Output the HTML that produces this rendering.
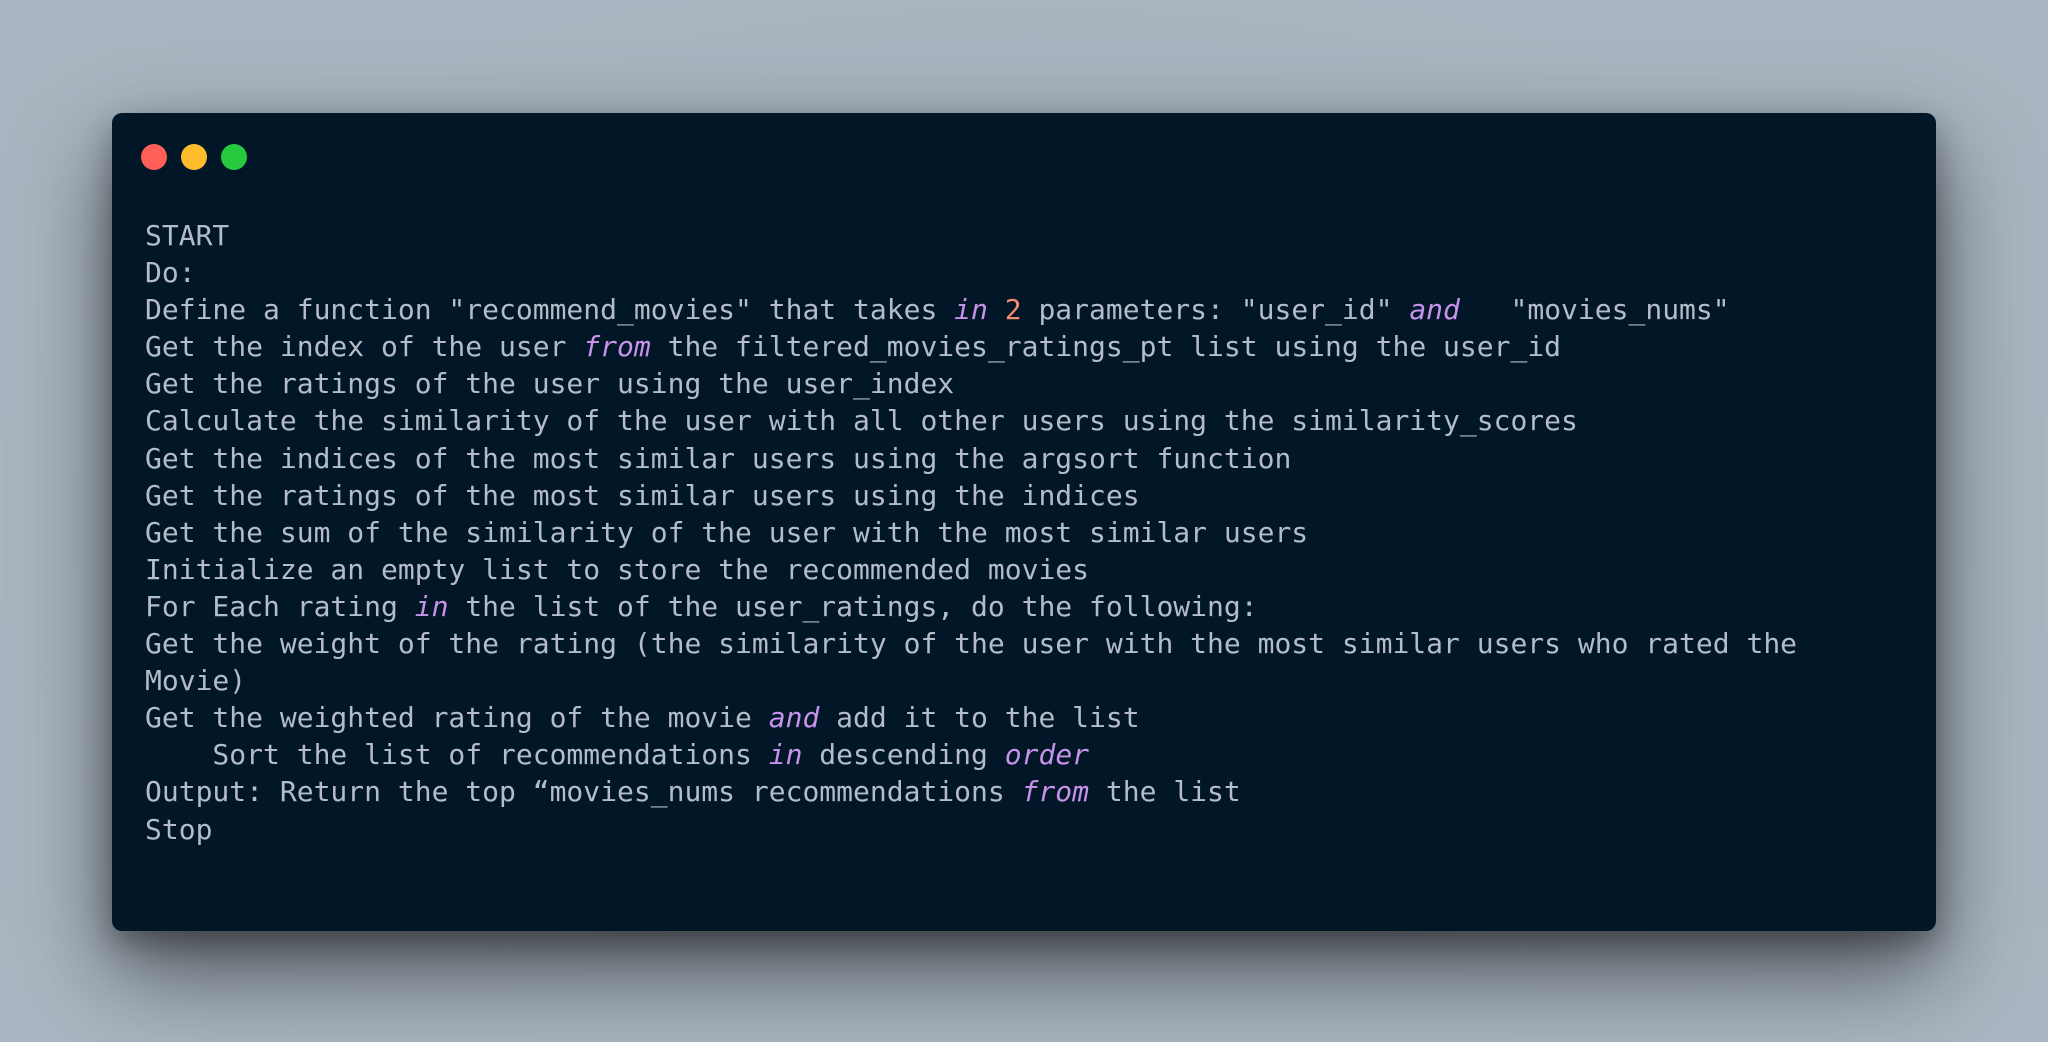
<!DOCTYPE html>
<html><head><meta charset="utf-8"><style>
html,body{margin:0;padding:0;width:2048px;height:1042px;overflow:hidden;background:#a7b3be;}
body{background:radial-gradient(ellipse at 50% 50%,#a4b0bb 0%,#a9b5c0 100%);}
.win{position:absolute;left:112px;top:113px;width:1824px;height:818px;background:#011627;border-radius:10px;box-shadow:0 40px 90px rgba(0,0,0,0.55),0 12px 30px rgba(0,0,0,0.3);}
.dot{position:absolute;top:144px;width:26px;height:26px;border-radius:50%;}
pre{position:absolute;left:145px;top:217px;margin:0;font-family:"DejaVu Sans Mono","Liberation Mono",monospace;font-size:28px;line-height:37.1px;color:#b3bcc8;}
i{color:#c792ea;font-style:italic}
b{color:#f78c6c;font-weight:normal}
</style></head><body>
<div class="win"></div>
<div class="dot" style="left:141px;background:#ff5f56"></div>
<div class="dot" style="left:181px;background:#ffbd2e"></div>
<div class="dot" style="left:221px;background:#27c93f"></div>
<pre>START
Do:
Define a function "recommend_movies" that takes <i>in</i> <b>2</b> parameters: "user_id" <i>and</i>   "movies_nums"
Get the index of the user <i>from</i> the filtered_movies_ratings_pt list using the user_id
Get the ratings of the user using the user_index
Calculate the similarity of the user with all other users using the similarity_scores
Get the indices of the most similar users using the argsort function
Get the ratings of the most similar users using the indices
Get the sum of the similarity of the user with the most similar users
Initialize an empty list to store the recommended movies
For Each rating <i>in</i> the list of the user_ratings, do the following:
Get the weight of the rating (the similarity of the user with the most similar users who rated the
Movie)
Get the weighted rating of the movie <i>and</i> add it to the list
    Sort the list of recommendations <i>in</i> descending <i>order</i>
Output: Return the top “movies_nums recommendations <i>from</i> the list
Stop</pre>
</body></html>
